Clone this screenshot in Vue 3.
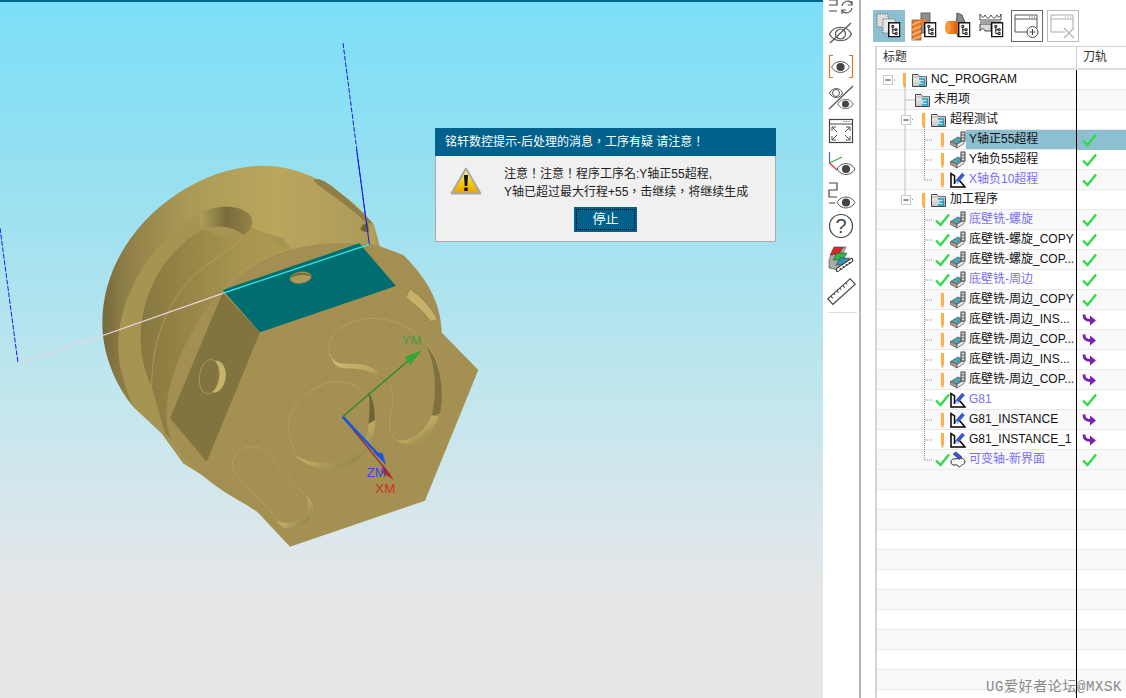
<script setup>
const CHECK = 'check'
const ARROW = 'arrow'

const rows = [
  { label: 'NC_PROGRAM', icon: 'folder', pad: 19, status: 'bar' },
  { label: '未用项', icon: 'folder', pad: 22 },
  { label: '超程测试', icon: 'folder', pad: 38, status: 'bar' },
  { label: 'Y轴正55超程', icon: 'mill', pad: 57, status: 'bar', path: CHECK, selected: true },
  { label: 'Y轴负55超程', icon: 'mill', pad: 57, status: 'bar', path: CHECK },
  { label: 'X轴负10超程', icon: 'drill', pad: 57, status: 'bar', path: CHECK, link: true },
  { label: '加工程序', icon: 'folder', pad: 38, status: 'bar' },
  { label: '底壁铣-螺旋', icon: 'mill', pad: 57, status: CHECK, path: CHECK, link: true },
  { label: '底壁铣-螺旋_COPY', icon: 'mill', pad: 57, status: CHECK, path: CHECK },
  { label: '底壁铣-螺旋_COP...', icon: 'mill', pad: 57, status: CHECK, path: CHECK },
  { label: '底壁铣-周边', icon: 'mill', pad: 57, status: CHECK, path: CHECK, link: true },
  { label: '底壁铣-周边_COPY', icon: 'mill', pad: 57, status: 'bar', path: CHECK },
  { label: '底壁铣-周边_INS...', icon: 'mill', pad: 57, status: 'bar', path: ARROW },
  { label: '底壁铣-周边_COP...', icon: 'mill', pad: 57, status: 'bar', path: ARROW },
  { label: '底壁铣-周边_INS...', icon: 'mill', pad: 57, status: 'bar', path: ARROW },
  { label: '底壁铣-周边_COP...', icon: 'mill', pad: 57, status: 'bar', path: ARROW },
  { label: 'G81', icon: 'drill', pad: 57, status: CHECK, path: CHECK, link: true },
  { label: 'G81_INSTANCE', icon: 'drill', pad: 57, status: 'bar', path: ARROW },
  { label: 'G81_INSTANCE_1', icon: 'drill', pad: 57, status: 'bar', path: ARROW },
  { label: '可变轴-新界面', icon: 'vaxis', pad: 57, status: CHECK, path: CHECK, link: true }
]

const emptyRows = 12

// dotted connectors from the node rows to their parents
const childRows = rows.map((r, i) => ({ ...r, y: i * 20 + 10 })).filter(r => r.pad === 57)
</script>

<template>
  <div class="app">
    <svg class="sprites" width="0" height="0">
      <defs>
        <linearGradient id="g-folder" x1="0" x2="0" y1="0" y2="1">
          <stop offset="0" stop-color="#f4f4f4" />
          <stop offset="1" stop-color="#c4c8ca" />
        </linearGradient>
        <symbol id="i-folder" viewBox="0 0 16 18">
          <path d="M.5 3.500h5.500l1.500 2h7v10H.5z" fill="url(#g-folder)" stroke="#444" />
          <path d="M.5 6h14" stroke="#aaa" />
          <path d="M7 8h5.500v3H8.500M12.500 11v3H7" fill="none" stroke="#12a0c8" stroke-width="1.500" />
        </symbol>
        <symbol id="i-mill" viewBox="0 0 16 18">
          <path d="M.5 10.500 8 6l5 2.500-6 5z" fill="#3a8e9e" stroke="#2d6470" stroke-width=".7" />
          <path d="M3 9l6 3M5.500 7.500l6 3M4 11.500l6-4.500" stroke="#86bcc4" stroke-width=".7" />
          <path d="M.5 10.500 7 13.500V17L.5 13.500z" fill="#a0a0a0" stroke="#555" stroke-width=".7" />
          <path d="M7 13.500l7-4.500v3.500L7 17z" fill="#e8e8e8" stroke="#555" stroke-width=".7" />
          <path d="M1 11 7 14" stroke="#d2702a" stroke-width="1" />
          <rect x="11" y="1" width="4" height="9" fill="#d8d8d8" stroke="#333" stroke-width=".9" />
          <path d="M11 4h4M11 7h4" stroke="#333" stroke-width=".7" />
        </symbol>
        <symbol id="i-drill" viewBox="0 0 16 18">
          <path d="M1 2.500 4.500 5v7l4.500-3 6 7H1z" fill="#fff" stroke="#000" stroke-width="1.500" stroke-linejoin="miter" />
          <path d="M6 11.500 13.500 3" stroke="#3a58c8" stroke-width="3.500" />
          <path d="M5 12.500 7 9.500l2 2z" fill="#cfd6f4" />
        </symbol>
        <symbol id="i-vaxis" viewBox="0 0 16 18">
          <path d="M1 11c0-2.500 2-3.500 4-3l5-1c3 0 5 2 5 4s-2 2-3 3-3 3-4 1-2-1-4-1-3-1-3-3z" fill="#f6f6f6" stroke="#333" />
          <path d="M3 3 6 1l6 5-2.500 2.500z" fill="#3a58c8" stroke="#20307e" stroke-width=".6" />
        </symbol>
        <symbol id="i-check" viewBox="0 0 15 14">
          <path d="M1 7.500 5.500 12 14 1.500" fill="none" stroke="#2fdc46" stroke-width="2.400" />
        </symbol>
        <symbol id="i-arrow" viewBox="0 0 15 14">
          <path d="M2 1.500c0 4 1.500 6 7 6" fill="none" stroke="#7b1fb0" stroke-width="3" />
          <path d="M8 2.500 14 7.500 8 12.500z" fill="#7b1fb0" />
        </symbol>
        <symbol id="i-treepage" viewBox="0 0 13 16">
          <rect x=".75" y=".75" width="11.500" height="14.500" fill="#fff" stroke="#111" stroke-width="1.500" />
          <path d="M4 3.500h2v2H4zM7.500 7h2v2h-2zM7.500 11h2v2h-2zM5 5.500V12h2.500M5 8h2.500" fill="none" stroke="#111" />
        </symbol>
        <symbol id="i-eye" viewBox="0 0 24 16">
          <path d="M1 8c5-9 17-9 22 0-5 9-17 9-22 0z" fill="none" stroke="#555" stroke-width="1.200" />
          <circle cx="12" cy="8" r="5" fill="#444" />
        </symbol>
        <linearGradient id="g-body" x1="0" x2="1" y1="0" y2="0">
          <stop offset="0" stop-color="#766a3b" />
          <stop offset=".08" stop-color="#8f7f48" />
          <stop offset=".3" stop-color="#ab9a56" />
          <stop offset=".6" stop-color="#b9a75d" />
          <stop offset="1" stop-color="#a9975a" />
        </linearGradient>
        <linearGradient id="g-groove" x1="0" x2="1" y1="0" y2="0">
          <stop offset="0" stop-color="#877840" />
          <stop offset=".5" stop-color="#a8964f" />
          <stop offset="1" stop-color="#b6a45c" />
        </linearGradient>
        <linearGradient id="g-slot" x1="0" x2="1" y1="0" y2="0">
          <stop offset="0" stop-color="#b09f58" />
          <stop offset=".5" stop-color="#7a6d3c" />
          <stop offset="1" stop-color="#94834a" />
        </linearGradient>
        <linearGradient id="g-wall" x1="0" x2="1" y1="0" y2="1">
          <stop offset="0" stop-color="#d2c078" />
          <stop offset=".55" stop-color="#b9a760" />
          <stop offset="1" stop-color="#7e7040" />
        </linearGradient>
        <linearGradient id="g-warn" x1="0" x2="0" y1="0" y2="1">
          <stop offset="0" stop-color="#fff1a0" />
          <stop offset=".6" stop-color="#f8c800" />
          <stop offset="1" stop-color="#e8a000" />
        </linearGradient>
      </defs>
    </svg>

    <main class="viewport">
      <svg class="scene" width="823" height="698" viewBox="0 0 823 698">
        <path d="M343 43 369 244M0 228 18 363" stroke="#1a1ae0" stroke-dasharray="5 1.500" fill="none" />
        <path d="M18 363 92 339" stroke="#eed4e4" />
        <g transform="translate(90 150) scale(.33333)">
          <!-- back disc -->
          <path d="M852 225C780 130 650 47 520 47 300 47 37 250 37 520c0 100 48 200 93 250l85 80 65 90 200 125 420-665z" fill="url(#g-body)" />
          <path d="M670 90c20-12 50 5 180 130l-20 0C760 150 680 110 670 90z" fill="#8f7f47" />
          <path d="M812 235c5-12 18-20 22-14l3 24c-12 2-25 0-25-10z" fill="#6f6437" />
          <path d="M850 222l-14 12 4 50 20 0-6-30z" fill="#b3a15a" />
          <!-- second step -->
          <path d="M330 190C200 260 85 420 85 590c0 70 25 130 45 180l85 80 65 90 200 125 300-500-200-300z" fill="#a69453" />
          <path d="M335 240C230 300 155 420 152 560c0 60 13 110 33 150l40 140 60 60 200 120 300-600-300-200C440 300 400 250 335 240z" fill="url(#g-groove)" />
          <path d="M330 190c40-25 120-30 150 5 15 20 5 45-20 60-30-30-90-30-125-15z" fill="url(#g-slot)" />
          <path d="M335 240l-5-50" stroke="#b9a75e" stroke-width="2" />
          <path d="M460 255C440 290 380 320 320 370 240 440 185 560 185 710" fill="none" stroke="#b9a75e" stroke-width="2" />
          <!-- front disc -->
          <path d="M395 425C480 320 640 265 805 280l55 5 80 30c60 60 110 130 115 225L1005 1000 600 1150 470 1065C350 1000 230 900 230 810 220 700 300 520 395 425z" fill="#a38f52" />
          <path d="M395 425C480 320 640 265 805 280" fill="none" stroke="#b9a75e" stroke-width="2" />
          <path d="M945 445l15-28c30 20 65 55 82 92l-20 6c-20-30-50-55-77-70z" fill="#c4b26a" stroke="#8a7b45" stroke-width="2" />
          <!-- hexagon faces -->
          <path d="M510 547 918 408 1165 660 1005 1052 600 1190 240 805 350 935z" fill="#a39052" />
          <path d="M398 428 510 547 350 935 240 805z" fill="#82743e" />
          <path d="M398 420 808 280 918 408 510 547z" fill="#006e70" />
          <!-- holes -->
          <ellipse cx="632" cy="383" rx="32" ry="17" transform="rotate(-8 632 383)" fill="#ad9b55" stroke="#8a7b45" stroke-width="2" />
          <path d="M602 385c5-18 50-22 60-6-20-8-45-6-60 6z" fill="#6f6437" />
          <ellipse cx="375" cy="680" rx="32" ry="48" transform="rotate(8 375 680)" fill="#c6b46c" />
          <ellipse cx="358" cy="680" rx="30" ry="52" transform="rotate(8 358 680)" fill="#82743e" stroke="#b9a75e" stroke-width="2" />
          <!-- pockets -->
          <path d="M720 620C700 560 760 505 850 505c90 0 190 65 200 175 15 100-20 160-50 190-40 25-90 10-100-30-5-50 20-90 0-130-30-50-70-60-130-60-30 0-45-10-50-40z" fill="#a39052" stroke="#b9a75e" stroke-width="2" />
          <path d="M725 620c15 35 65 10 115 30 30 15 50 40 60 60-30-40-80-55-130-55-25 0-40-10-45-35z" fill="url(#g-wall)" />
          <path d="M1010 590c40 40 55 130 40 200l-25 10c15-60 15-150-15-210z" fill="#7e7040" />
          <path d="M1047 800c-20 60-87 100-127 70 40 10 90-30 105-75z" fill="url(#g-wall)" />
          <path d="M595 830c-5-70 85-135 145-135 50 0 90 25 110 85 10 50 0 80-20 120-40 50-110 65-170 45-30-10-60-45-65-115z" fill="#a39052" stroke="#b9a75e" stroke-width="2" />
          <path d="M835 725c15 20 20 55 20 90l-20 10c5-35 5-70 0-100z" fill="#6f6437" />
          <path d="M610 915c50 45 150 60 210 0 30-35 35-75 35-105l-20 12c0 30-10 60-30 80-50 45-120 50-195 13z" fill="url(#g-wall)" />
          <path d="M430 930c10-40 60-50 90-30l130 140c30 30 20 70-20 90-30 10-60-10-70-25L440 975c-15-15-15-30-10-45z" fill="#a39052" stroke="#b9a75e" stroke-width="2" />
          <path d="M650 1035c30 35 20 95-50 103-15 0-30-10-40-25 40 15 90 0 95-40 0-15-3-28-5-38z" fill="url(#g-wall)" />
          <!-- model axes -->
          <path d="M758 800 900 975" stroke="#9c3030" stroke-width="4" />
          <path d="M880 945 912 990 872 965z" fill="#c0252a" />
          <path d="M758 800 875 925" stroke="#1a55e0" stroke-width="8" />
          <path d="M850 905 888 945 878 910z" fill="#1a55e0" />
          <path d="M758 800 960 628" stroke="#2a8a2a" stroke-width="4" />
          <path d="M945 620 997 600 960 645z" fill="#35a535" />
          <text class="axis" x="935" y="585" fill="#4a9a4a">YM</text>
          <text class="axis" x="830" y="982" fill="#3a4ae0">ZM</text>
          <text class="axis" x="856" y="1028" fill="#d03030">XM</text>
          <path d="M398 430 838 283" stroke="#30f0f0" stroke-width="3.500" />
          <path d="M0 570 398 430" stroke="#eed4e4" stroke-width="3.500" />
          <path d="M800 0 838 283" stroke="#1a1ae0" stroke-width="3" />
        </g>
      </svg>

      <div class="dialog">
        <div class="dialog-title">铭轩数控提示-后处理的消息，工序有疑 请注意！</div>
        <div class="dialog-body">
          <svg class="warn" width="32" height="29" viewBox="0 0 32 29">
            <path d="M16 1.500 30.500 26.500h-29z" fill="url(#g-warn)" stroke="#a8a8a8" stroke-width="2" stroke-linejoin="round" />
            <path d="M14 8h4l-.7 11h-2.600z" fill="#111" />
            <rect x="14.300" y="20.500" width="3.400" height="3.500" fill="#111" />
          </svg>
          <div class="dialog-msg">
            <div>注意！注意！程序工序名:Y轴正55超程,</div>
            <div>Y轴已超过最大行程+55，击继续，将继续生成</div>
          </div>
        </div>
        <div class="dialog-actions">
          <button class="stop-btn" type="button"><span>停止</span></button>
        </div>
      </div>
    </main>

    <aside class="side-tools">
      <svg class="st" viewBox="0 0 36 18" height="18">
        <path d="M6 0h8v5H6M6 11h8" fill="none" stroke="#444" stroke-width="1.200" />
        <path d="M19 6c1-5 8-7 10-2M29 8c-1 5-8 7-10 2" fill="none" stroke="#555" stroke-width="1.200" />
        <path d="M29 1v4h-4M19 14v-4h4" fill="none" stroke="#555" stroke-width="1.200" />
      </svg>
      <svg class="st" viewBox="0 18 36 30" height="30">
        <path d="M6.500 34c5-9 17-9 22 0-5 9-17 9-22 0z" fill="none" stroke="#555" stroke-width="1.200" />
        <circle cx="17.500" cy="34" r="5" fill="none" stroke="#555" stroke-width="1.200" />
        <path d="M7 43 28 23" stroke="#555" stroke-width="1.200" />
      </svg>
      <svg class="st" viewBox="0 48 36 36" height="36">
        <path d="M10 55.500H6.500v22H10M26 55.500h3.500v22H26" fill="none" stroke="#d9782a" stroke-width="1.200" />
        <use href="#i-eye" x="7.500" y="60.500" width="20" height="13" />
      </svg>
      <svg class="st" viewBox="0 84 36 28" height="28">
        <path d="M6.500 93c3-6 11-6 13 0-2 6-10 6-13 0z" fill="none" stroke="#555" />
        <circle cx="13" cy="93" r="3.500" fill="none" stroke="#555" />
        <use href="#i-eye" x="14" y="98" width="17" height="12" />
        <path d="M6 109 30 86" stroke="#555" stroke-width="1.200" />
      </svg>
      <svg class="st" viewBox="0 112 36 38" height="38">
        <rect x="6.500" y="119.500" width="23" height="23" fill="#fff" stroke="#444" stroke-width="1.200" />
        <path d="M6.500 124h23" stroke="#444" />
        <path d="M23 121.500h1M25.500 121.500h1M20.500 121.500h1" stroke="#444" />
        <path d="M9 127h4M9 127v4M9 127l5 5M27 127h-4M27 127v4M27 127l-5 5M9 140h4M9 140v-4M9 140l5-5M27 140h-4M27 140v-4M27 140l-5-5" fill="none" stroke="#555" />
      </svg>
      <svg class="st" viewBox="0 150 36 30" height="30">
        <path d="M6.500 163V152" stroke="#3a6ad0" stroke-width="1.200" />
        <path d="M6.500 163 19 157" stroke="#3fb040" stroke-width="1.200" />
        <path d="M6.500 163 14 170" stroke="#d83030" stroke-width="1.200" />
        <use href="#i-eye" x="13" y="162.500" width="20" height="13" />
      </svg>
      <svg class="st" viewBox="0 180 36 30" height="30">
        <path d="M6 183h8v7H6v7h8M6 203h6" fill="none" stroke="#444" stroke-width="1.200" />
        <use href="#i-eye" x="13" y="196" width="20" height="13" />
      </svg>
      <svg class="st" viewBox="0 210 36 32" height="32">
        <circle cx="18" cy="226" r="11.500" fill="none" stroke="#444" stroke-width="1.200" />
        <text class="q" x="18" y="233" text-anchor="middle">?</text>
      </svg>
      <svg class="st" viewBox="0 242 36 32" height="32">
        <path d="M6 268v-8l5-13h12l-4 8v6l-4 9z" fill="#aaa" stroke="#444" stroke-width=".6" />
        <path d="M7 255 11 247.500h9L16 254z" fill="#d82828" stroke="#333" stroke-width=".5" />
        <path d="M10 260 14 253h10l-4 7z" fill="#2db84a" stroke="#333" stroke-width=".5" />
        <path d="M13 265 17 258h10l-4 7z" fill="#3a8fb8" stroke="#333" stroke-width=".5" />
        <path d="M14 272 30 261l-1-3-16 11z" fill="#fff" stroke="#222" />
        <path d="M17 268l1 2M20 266l1 2M23 264l1 2M26 262l1 2" stroke="#222" />
      </svg>
      <svg class="st" viewBox="0 274 36 34" height="34">
        <g transform="rotate(-42 18 291)">
          <rect x="3" y="288" width="30" height="7.500" fill="#fff" stroke="#444" stroke-width="1.200" />
          <path d="M7 288v3M11 288v2M15 288v3M19 288v2M23 288v3M27 288v2" stroke="#444" />
        </g>
      </svg>
      <div class="st-divider"></div>
    </aside>

    <section class="panel">
      <div class="panel-tools">
        <button class="pt active" type="button">
          <svg viewBox="0 0 32 32" width="32" height="32">
            <rect x="4" y="4" width="11" height="13" fill="#dcdcdc" stroke="#777" stroke-dasharray="1.500 1" />
            <rect x="10" y="9" width="12" height="14" fill="#e8e8e8" stroke="#777" stroke-dasharray="1.500 1" />
            <use href="#i-treepage" x="15" y="12" width="12.500" height="15.500" />
          </svg>
        </button>
        <button class="pt" type="button">
          <svg viewBox="0 0 32 32" width="32" height="32">
            <rect x="13" y="3" width="9" height="20" fill="#8f8f8f" stroke="#666" />
            <rect x="4" y="10" width="9" height="20" fill="#ee7b22" stroke="#7a5a40" stroke-width=".8" />
            <path d="M4 15l9-4M4 20l9-4M4 25l9-4M4 30l9-4" stroke="#f6b27a" stroke-width="1.500" />
            <rect x="13" y="9" width="5" height="6" fill="#ee7b22" />
            <use href="#i-treepage" x="16" y="12" width="12.500" height="15.500" />
          </svg>
        </button>
        <button class="pt" type="button">
          <svg viewBox="0 0 32 32" width="32" height="32">
            <path d="M15 3l5 2 4 10-8 12-2-6z" fill="#8a8a8a" stroke="#555" />
            <path d="M6 11h8v13H6z" fill="#ee7b22" />
            <ellipse cx="6" cy="17.500" rx="3" ry="6.500" fill="#f49a3c" />
            <ellipse cx="14" cy="17.500" rx="2.500" ry="6.500" fill="#d96a14" />
            <use href="#i-treepage" x="16" y="12" width="12.500" height="15.500" />
          </svg>
        </button>
        <button class="pt" type="button">
          <svg viewBox="0 0 32 32" width="32" height="32">
            <path d="M3 4c2 4 4 4 5 1 2 4 4 4 6 0 2 4 4 4 6 0 1 3 3 3 4-1v6H3z" fill="#fff" stroke="#444" />
            <path d="M3 12h21" stroke="#444" />
            <path d="M3 14v7c2-3 4-3 5 0h6v-7z" fill="#d8d8d8" stroke="#444" />
            <use href="#i-treepage" x="14" y="12" width="12.500" height="15.500" />
          </svg>
        </button>
        <button class="pt framed" type="button">
          <svg viewBox="0 0 32 32" width="32" height="32">
            <path d="M18 22H4V5h22v13M4 9h22" fill="none" stroke="#555" />
            <path d="M18 7h1M20.500 7h1M23 7h1" stroke="#444" />
            <circle cx="21.500" cy="22" r="5.500" fill="#fff" stroke="#444" />
            <path d="M18.500 22h6M21.500 19v6" stroke="#444" />
          </svg>
        </button>
        <button class="pt framed disabled" type="button">
          <svg viewBox="0 0 32 32" width="32" height="32">
            <path d="M18 22H4V5h22v13M4 9h22" fill="none" stroke="#aaa" />
            <path d="M18 7h1M20.500 7h1M23 7h1" stroke="#aaa" />
            <path d="M17 18l10 10M27 18 17 28" stroke="#bbb" stroke-width="1.500" />
          </svg>
        </button>
      </div>

      <div class="tree">
        <div class="tree-head">
          <div class="h-title">标题</div>
          <div class="h-path">刀轨</div>
        </div>
        <div class="tree-body">
          <div
            v-for="(row, i) in rows"
            :key="i"
            class="row"
            :class="{ odd: i % 2 === 1, selected: row.selected, link: row.link }"
          >
            <div class="cell-title" :style="{ paddingLeft: row.pad + 'px' }">
              <span class="status">
                <i v-if="row.status === 'bar'" class="warn-bar"></i>
                <svg v-else-if="row.status === 'check'" width="15" height="14"><use href="#i-check" /></svg>
              </span>
              <svg class="node-icon" width="16" height="18"><use :href="'#i-' + row.icon" /></svg>
              <span class="label">{{ row.label }}</span>
            </div>
            <div class="cell-path">
              <svg v-if="row.path" width="15" height="14"><use :href="'#i-' + row.path" /></svg>
            </div>
          </div>
          <div v-for="n in emptyRows" :key="'e' + n" class="row" :class="{ odd: n % 2 === 1 }">
            <div class="cell-title"></div>
            <div class="cell-path"></div>
          </div>

          <svg class="guides" width="199" height="400">
            <g fill="none" stroke="#888" stroke-dasharray="1 1">
              <path d="M28 14.500V129.500M28.500 30H38M15 10H19M33 49.500H37M33 129.500H37" />
              <path d="M47.500 55V110M47.500 135V390" />
              <path v-for="r in childRows" :key="r.y" :d="`M48 ${r.y}H55`" />
            </g>
            <g fill="#fff" stroke="#c8c8c8">
              <rect x="6.500" y="5.500" width="9" height="9" />
              <rect x="24.500" y="45.500" width="9" height="9" />
              <rect x="24.500" y="125.500" width="9" height="9" />
            </g>
            <path d="M8.500 10h5M26.500 50h5M26.500 130h5" stroke="#222" />
          </svg>
        </div>
      </div>
      <div class="watermark">UG爱好者论坛@MXSK</div>
    </section>
  </div>
</template>

<style>
html,
body {
  margin: 0;
  background: #fff;
  overflow: hidden;
}
</style>

<style scoped>
.app {
  display: flex;
  width: 1126px;
  height: 698px;
  overflow: hidden;
  background: #fff;
  color: #111;
  font: 12px "Liberation Sans", "Noto Sans CJK SC", sans-serif;
}

.sprites {
  position: absolute;
}

.viewport {
  position: relative;
  flex: 0 0 823px;
  height: 698px;
  box-sizing: border-box;
  border-top: 2px solid #00688a;
  background: linear-gradient(#7cdff8 0%, #97e0f0 25%, #c0e6ee 55%, #e6e7e9 85%, #e6e7e9 100%);
  overflow: hidden;
}

.scene {
  display: block;
  margin-top: -2px;
}

.axis {
  font-size: 40px;
  font-family: "Liberation Sans", sans-serif;
}

.dialog {
  position: absolute;
  left: 435px;
  top: 126px;
  width: 341px;
  height: 114px;
  box-sizing: border-box;
  background: #f0f0f0;
  border: 1px solid #a9a9a9;
  border-top: 0;
  font-family: "Liberation Sans", "Noto Sans CJK TC", sans-serif;
}

.dialog-title {
  margin: 0 -1px;
  height: 28px;
  line-height: 28px;
  padding-left: 10px;
  background: #00628c;
  color: #fff;
}

.dialog-body {
  display: flex;
  padding: 9px 0 0 14px;
}

.warn {
  margin-top: 2px;
}

.dialog-msg {
  margin-left: 22px;
  line-height: 18px;
  color: #222;
}

.dialog-actions {
  display: flex;
  justify-content: center;
  margin-top: 6px;
}

.stop-btn {
  width: 63px;
  height: 25px;
  padding: 2px;
  border: 0;
  background: #00628c;
  color: #fff;
  font: inherit;
  font-size: 13px;
}

.stop-btn span {
  display: block;
  height: 19px;
  line-height: 18px;
  border: 1px dotted #000;
}

.side-tools {
  flex: 0 0 36px;
  display: flex;
  flex-direction: column;
  border-right: 2px solid #b4b4b4;
}

.st {
  display: block;
  width: 36px;
  flex: none;
}

.q {
  font-size: 20px;
  fill: #444;
  font-family: "Liberation Sans", sans-serif;
}

.st-divider {
  height: 1px;
  margin: 4px 2px 0 5px;
  background: #ddd;
}

.panel {
  position: relative;
  flex: 1;
  min-width: 0;
  padding-top: 10px;
}

.panel-tools {
  display: flex;
  gap: 2.5px;
  height: 32px;
  margin-left: 12px;
}

.pt {
  width: 32px;
  height: 32px;
  padding: 0;
  border: 0;
  background: none;
  box-sizing: border-box;
}

.pt svg {
  display: block;
}

.pt.active {
  background: #8cc0d0;
}

.pt.framed {
  outline: 1.5px solid #666;
  outline-offset: -1.5px;
}

.pt.disabled {
  margin-left: 1.5px;
  outline-color: #bbb;
}

.tree {
  margin: 4px 0 0 14px;
  height: 652px;
  overflow: hidden;
  border-left: 2px solid #d4d4d4;
  border-top: 1px solid #d4d4d4;
}

.tree-head {
  display: flex;
  height: 21px;
  line-height: 21px;
  border-bottom: 2px solid #dedede;
  color: #333;
}

.h-title {
  width: 199px;
  padding-left: 6px;
  box-sizing: border-box;
}

.h-path {
  flex: 1;
  padding-left: 6px;
  border-left: 1px solid #cfcfcf;
}

.tree-body {
  position: relative;
}

.row {
  display: flex;
  height: 20px;
  box-sizing: border-box;
  border-bottom: 1px solid #e9e9e9;
}

.row.odd {
  background: #f9f9f9;
}

.cell-title {
  display: flex;
  align-items: center;
  width: 199px;
  box-sizing: border-box;
}

.status {
  flex: 0 0 16px;
  display: flex;
  align-items: center;
  justify-content: center;
}

.warn-bar {
  display: block;
  width: 3px;
  height: 12px;
  background: #ffb04a;
  box-shadow: 0 3px 0 -0.5px #ffb04a;
  margin-top: -2px;
}

.node-icon {
  flex: none;
}

.label {
  flex: 1;
  align-self: stretch;
  line-height: 19px;
  padding-left: 3px;
  white-space: nowrap;
  overflow: hidden;
}

.row.link .label {
  color: #7a6ef2;
}

.row.selected .label,
.row.selected .cell-path {
  background: #8cc0d0;
}

.cell-path {
  flex: 1;
  display: flex;
  align-items: center;
  padding-left: 5px;
  margin-bottom: -1px;
  padding-bottom: 1px;
  border-left: 1px solid #000;
}

.guides {
  position: absolute;
  left: 0;
  top: 0;
  pointer-events: none;
}

.watermark {
  position: absolute;
  right: 4px;
  bottom: 3px;
  font-family: "Liberation Mono", "Noto Sans CJK SC", monospace;
  font-size: 14px;
  letter-spacing: 0.6px;
  color: #8a8a8a;
  white-space: nowrap;
}
</style>
